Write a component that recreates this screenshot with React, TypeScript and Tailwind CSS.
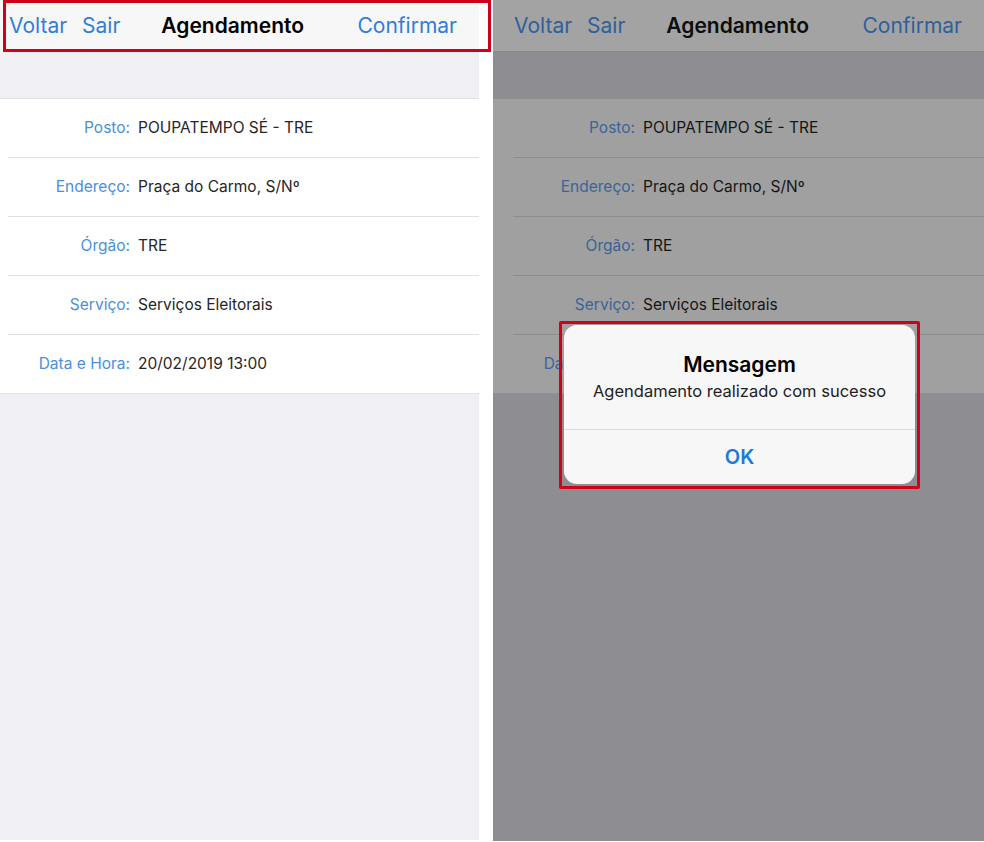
import React from 'react';

const rows = [
  { label: 'Posto:', value: 'POUPATEMPO SÉ - TRE' },
  { label: 'Endereço:', value: 'Praça do Carmo, S/Nº' },
  { label: 'Órgão:', value: 'TRE' },
  { label: 'Serviço:', value: 'Serviços Eleitorais' },
  { label: 'Data e Hora:', value: '20/02/2019 13:00' },
];

interface ScreenProps {
  dim?: boolean;
}

const Screen: React.FC<ScreenProps> = ({ dim }) => {
  return (
    <div className={`flex flex-col h-full ${dim ? 'bg-[#8e8d92]' : 'bg-[#efeff4]'}`}>
      {/* Nav bar */}
      <div
        className={`flex items-center h-[52px] shrink-0 pr-[22px] text-[21px] ${
          dim ? 'bg-[#a3a3a3] border-b border-[#8a8a8a] pl-[21px]' : 'bg-[#f7f7f8] pl-[9px]'
        }`}
      >
        <span className={dim ? 'text-[#2f5f9c]' : 'text-[#2f7ed8]'}>Voltar</span>
        <span className={`ml-[15px] ${dim ? 'text-[#2f5f9c]' : 'text-[#2f7ed8]'}`}>Sair</span>
        <span className={`ml-[41px] font-semibold ${dim ? 'text-[#0d0d0d]' : 'text-black'}`}>
          Agendamento
        </span>
        <span className={`ml-auto ${dim ? 'text-[#2f5f9c]' : 'text-[#2f7ed8]'}`}>Confirmar</span>
      </div>

      <div className="h-[46px] shrink-0" />

      {/* Details list */}
      <div
        className={`border-y ${dim ? 'bg-[#a0a0a0] border-[#8f8f8f]' : 'bg-white border-[#e2e2e6]'}`}
      >
        {rows.map((row, i) => (
          <div key={row.label}>
            {i > 0 && (
              <div
                className={`h-px ${dim ? 'ml-[20px] bg-[#8d8d8d]' : 'ml-[8px] bg-[#e0e0e4]'}`}
              />
            )}
            <div className={`flex items-center h-[58px] text-[15.5px] ${dim ? 'pl-[12px]' : ''}`}>
              <span
                className={`w-[130px] text-right ${dim ? 'text-[#3a6498]' : 'text-[#4a8fdc]'}`}
              >
                {row.label}
              </span>
              <span className={`ml-[8px] ${dim ? 'text-[#151515]' : 'text-[#262626]'}`}>
                {row.value}
              </span>
            </div>
          </div>
        ))}
      </div>
    </div>
  );
};

const App: React.FC = () => {
  return (
    <div
      className="relative flex w-[984px] h-[842px] bg-white overflow-hidden"
      style={{ fontFamily: 'Inter, "Noto Sans", sans-serif' }}
    >
      <div className="w-[479px] h-[840px] shrink-0">
        <Screen />
      </div>
      <div className="w-[14px] shrink-0" />
      <div className="relative w-[491px] h-[841px] shrink-0">
        <Screen dim />

        {/* Alert */}
        <div className="absolute left-[71px] top-[325px] w-[351px] h-[159px] rounded-[13px] bg-[#f7f7f7] flex flex-col">
          <div className="flex flex-col items-center pt-[27px] h-[104px]">
            <span className="text-[21px] font-semibold text-black leading-[26px]">Mensagem</span>
            <span className="mt-[3px] text-[16.5px] text-[#222] leading-[20px]">
              Agendamento realizado com sucesso
            </span>
          </div>
          <div className="h-px bg-[#dcdcdc]" />
          <div className="flex-1 flex items-center justify-center text-[20px] font-semibold text-[#1b78dc]">
            OK
          </div>
        </div>
        <div className="absolute left-[66px] top-[321px] w-[361px] h-[168px] border-[3px] border-[#d0021b] rounded-[2px]" />
      </div>

      {/* Highlight around left nav bar */}
      <div className="absolute left-[3px] top-0 w-[488px] h-[52px] border-[3px] border-[#d0021b]" />
    </div>
  );
};

export default App;
